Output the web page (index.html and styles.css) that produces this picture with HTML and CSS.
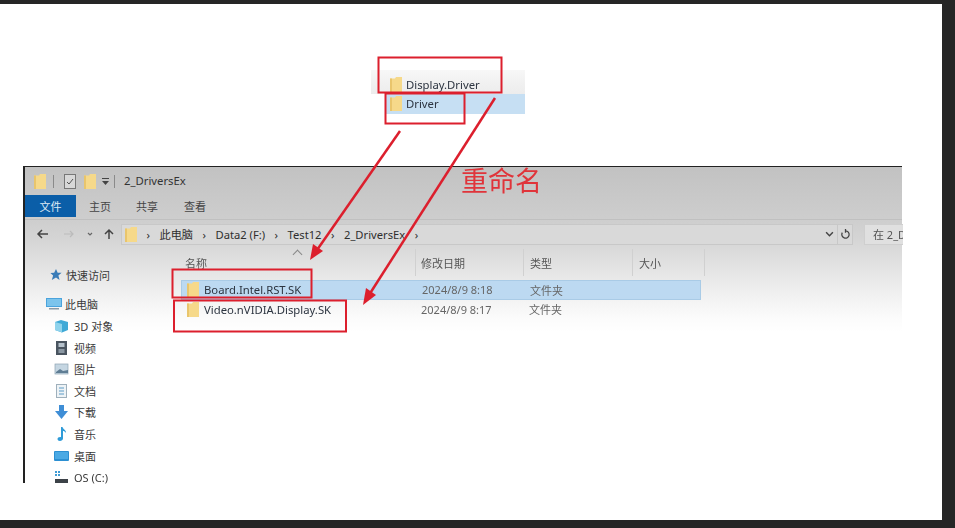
FILE: index.html
```html
<!DOCTYPE html>
<html lang="zh-CN">

<head>
    <meta charset="UTF-8">
    <meta name="viewport" content="width=device-width, initial-scale=1.0">
    <title>重命名</title>
    <link rel="stylesheet" href="styles.css">
</head>

<body>
    <svg class="defs" width="0" height="0">
        <symbol id="folder" viewBox="0 0 12 15">
            <path d="M0 1.500h5l1-1.500h6v15H0z" fill="#f6d98a" />
            <path d="M0 1.500h2V15H0z" fill="#e9c56c" />
        </symbol>
    </svg>
    <div class="page">
        <div class="snippet">
            <div class="snippet-row first">
                <svg class="folder"><use href="#folder" /></svg>
                <span>Display.Driver</span>
            </div>
            <div class="snippet-row active">
                <svg class="folder"><use href="#folder" /></svg>
                <span>Driver</span>
            </div>
        </div>

        <div class="window">
            <div class="titlebar">
                <svg class="folder"><use href="#folder" /></svg>
                <i class="bar-sep"></i>
                <svg class="qa-check" viewBox="0 0 12 15">
                    <rect x="0.500" y="0.500" width="11" height="14" fill="#d8d8d8" stroke="#777" />
                    <path d="M3 8l2 2 4-5" fill="none" stroke="#555" />
                </svg>
                <svg class="folder"><use href="#folder" /></svg>
                <svg class="qa-drop" viewBox="0 0 7 7">
                    <path d="M0 0h7v1H0zM0 3h7L3.500 7z" fill="#444" />
                </svg>
                <i class="bar-sep"></i>
                <span class="title">2_DriversEx</span>
            </div>
            <div class="tabs">
                <span class="tab current">文件</span>
                <span class="tab home">主页</span>
                <span class="tab share">共享</span>
                <span class="tab view">查看</span>
            </div>
            <div class="toolbar">
                <svg class="nav-arrows" viewBox="0 0 80 14">
                    <path d="M13 7H3M7 3L3 7l4 4" fill="none" stroke="#444" stroke-width="1.500" />
                    <path d="M29 7h9M35 4l3 3-3 3" fill="none" stroke="#bbb" stroke-width="1.200" />
                    <path d="M53 6l2 2 2-2" fill="none" stroke="#666" stroke-width="1.200" />
                    <path d="M74 12V3M70 7l4-4 4 4" fill="none" stroke="#444" stroke-width="1.500" />
                </svg>
                <div class="address">
                    <svg class="folder"><use href="#folder" /></svg>
                    <span class="crumb">›</span>
                    <span class="crumb">此电脑</span>
                    <span class="crumb">›</span>
                    <span class="crumb">Data2 (F:)</span>
                    <span class="crumb">›</span>
                    <span class="crumb">Test12</span>
                    <span class="crumb">›</span>
                    <span class="crumb">2_DriversEx</span>
                    <span class="crumb">›</span>
                    <svg class="addr-drop" viewBox="0 0 8 5">
                        <path d="M1 1l3 3 3-3" fill="none" stroke="#444" stroke-width="1.300" />
                    </svg>
                </div>
                <div class="refresh">
                    <svg viewBox="0 0 12 12" width="11" height="11">
                        <path d="M6 2a4 4 0 1 1-3.500 2M6 0v4" fill="none" stroke="#444" stroke-width="1.400" />
                    </svg>
                </div>
                <div class="search">在 2_D</div>
            </div>
            <div class="body">
                <ul class="nav">
                    <li class="quick">
                        <svg viewBox="0 0 14 14"><path d="M7 1l1.800 4h4.200L9.600 8l1.200 5L7 10.300 2.500 13l1.400-5L1 5.500l4-.5z" fill="#3a7cb8" /></svg>
                        快速访问
                    </li>
                    <li class="pc">
                        <svg viewBox="0 0 16 14"><rect x="0" y="1" width="16" height="9" fill="#4aa3dc" /><rect x="1" y="2" width="14" height="7" fill="#7cc4ec" /><rect x="3" y="11" width="10" height="1.500" fill="#8a9aa6" /></svg>
                        此电脑
                    </li>
                    <li>
                        <svg viewBox="0 0 15 14"><path d="M7 1l7 2v8l-6 2.500L1 11V3z" fill="#3fa9d6" /><path d="M1 3l7 2v8.500L1 11z" fill="#8fd3ec" /></svg>
                        3D 对象
                    </li>
                    <li>
                        <svg viewBox="0 0 15 14"><rect x="2" y="0" width="11" height="14" fill="#4a5560" /><rect x="4.500" y="2" width="6" height="4" fill="#b6c2cc" /><rect x="4.500" y="8" width="6" height="4" fill="#8b98a3" /></svg>
                        视频
                    </li>
                    <li>
                        <svg viewBox="0 0 15 14"><rect x="1" y="2" width="13" height="10" fill="#c5d6e2" stroke="#8ea3b2" stroke-width="0.700" /><path d="M2 10l4-3 3 2 5-1v3H2z" fill="#5f7d94" /></svg>
                        图片
                    </li>
                    <li>
                        <svg viewBox="0 0 15 14"><rect x="2.500" y="0.500" width="10" height="13" fill="#eef3f6" stroke="#9fb0bc" /><path d="M5 4h5M5 7h5M5 10h5" stroke="#5c9bc6" /></svg>
                        文档
                    </li>
                    <li>
                        <svg viewBox="0 0 15 14"><path d="M5 0h5v6h4l-6.500 8L1 6h4z" fill="#3f8ed6" /></svg>
                        下载
                    </li>
                    <li>
                        <svg viewBox="0 0 15 14"><path d="M7 0h1.500c.5 2.500 4 3 3.500 6-1-1.500-2-2-3-2v7.500C9 13 7.500 14 6 14s-2.500-.8-2.500-2S5 9.800 7 10.200z" fill="#2f9bd8" /></svg>
                        音乐
                    </li>
                    <li>
                        <svg viewBox="0 0 15 14"><rect x="0" y="2" width="15" height="10" rx="1" fill="#2b8fd2" /><rect x="1" y="3" width="13" height="7" fill="#4aa9e4" /></svg>
                        桌面
                    </li>
                    <li>
                        <svg viewBox="0 0 15 14"><path d="M1 1h2v2H1zM4 1h2v2H4zM1 4h2v2H1zM4 4h2v2H4z" fill="#3f9bd4" /><rect x="1" y="9" width="13" height="4" fill="#3c4248" /></svg>
                        OS (C:)
                    </li>
                </ul>
                <div class="files">
                    <div class="columns">
                        <span class="col name">名称</span>
                        <span class="col date">修改日期</span>
                        <span class="col type">类型</span>
                        <span class="col size">大小</span>
                    </div>
                    <div class="file selected">
                        <span class="cell name">
                            <svg class="folder"><use href="#folder" /></svg>
                            Board.Intel.RST.SK
                        </span>
                        <span class="cell date">2024/8/9 8:18</span>
                        <span class="cell type">文件夹</span>
                    </div>
                    <div class="file">
                        <span class="cell name">
                            <svg class="folder"><use href="#folder" /></svg>
                            Video.nVIDIA.Display.SK
                        </span>
                        <span class="cell date">2024/8/9 8:17</span>
                        <span class="cell type">文件夹</span>
                    </div>
                </div>
            </div>
        </div>
    </div>

    <div class="rename-note">重命名</div>
    <svg class="marks" viewBox="0 0 955 528">
        <g fill="none" stroke="#dc1f2d" stroke-width="2">
            <rect x="378.500" y="57.500" width="123" height="35" />
            <rect x="385.500" y="93.500" width="79" height="30" />
            <rect x="172.500" y="269.500" width="139" height="28" />
            <rect x="174" y="300.500" width="172" height="31" />
            <path d="M400 131L317 250" stroke-width="2.500" />
            <path d="M495 98L369 295" stroke-width="2.500" />
        </g>
        <path d="M310 260l3-16 10 7z" fill="#dc1f2d" />
        <path d="M363 305l3-17 10 7z" fill="#dc1f2d" />
    </svg>
</body>

</html>
```

FILE: styles.css
```css
* {
    box-sizing: border-box;
}

html,
body {
    margin: 0;
    padding: 0;
}

body {
    position: relative;
    width: 955px;
    height: 528px;
    overflow: hidden;
    background-color: #262626;
    font-family: "Noto Sans", "Noto Sans CJK SC", sans-serif;
    font-size: 11px;
    color: #333;
}

.defs {
    position: absolute;
}

.page {
    width: 942px;
    height: 516px;
    margin-top: 4px;
    padding-top: 66px;
    background-color: #fff;
}

.folder {
    display: block;
    flex: none;
    width: 12px;
    height: 15px;
}

.snippet {
    width: 154px;
    margin-left: 371px;
    filter: blur(0.5px);
}

.snippet-row {
    display: flex;
    align-items: center;
    gap: 4px;
    padding-left: 19px;
    font-size: 11.300px;
    color: #2c3440;
}

.snippet-row.first {
    height: 24px;
    padding-top: 5px;
    background: linear-gradient(#f7f7f7, #ececec);
}

.snippet-row.active {
    height: 20px;
    margin-left: 14px;
    padding-left: 5px;
    padding-bottom: 1px;
    background-color: #c6dff3;
}

.window {
    width: 879px;
    height: 317px;
    margin-left: 23px;
    margin-top: 52px;
    border-top: 1px solid #222;
    border-left: 2px solid #222;
    background: linear-gradient(#c2c2c2, #cdcdcd 50px, #d4d4d4 70px, #dedede 90px, #efefef 125px, #fbfbfb 150px, #fff 165px);
    filter: blur(0.5px);
}

.titlebar {
    display: flex;
    align-items: center;
    height: 28px;
    padding-left: 9px;
}

.bar-sep {
    display: block;
    width: 1px;
    height: 13px;
    margin: 0 10px 0 7px;
    background-color: #8a8a8a;
}

.qa-check {
    width: 12px;
    height: 15px;
    margin-right: 8px;
}

.qa-drop {
    width: 7px;
    height: 7px;
    margin-left: 6px;
}

.titlebar .qa-drop + .bar-sep {
    margin: 0 9px 0 5px;
}

.title {
    margin-top: -2px;
    font-size: 11.300px;
    color: #333;
}

.tabs {
    display: flex;
    height: 22px;
}

.tab {
    display: flex;
    align-items: center;
    color: #444;
}

.tab.current {
    justify-content: center;
    width: 51px;
    color: #dfeaf5;
    background-color: #0b5ea8;
}

.tab.home {
    margin-left: 13px;
}

.tab.share {
    margin-left: 25px;
}

.tab.view {
    margin-left: 26px;
}

.toolbar {
    display: flex;
    align-items: center;
    height: 26px;
    margin-top: 2px;
    border-top: 1px solid #c0c0c0;
    padding-top: 3px;
}

.nav-arrows {
    flex: none;
    width: 80px;
    height: 14px;
    margin-left: 10px;
    margin-right: 6px;
}

.address {
    display: flex;
    align-items: center;
    gap: 9.500px;
    flex: none;
    width: 717px;
    height: 21px;
    padding: 0 3px;
    border: 1px solid #c8c8c8;
    background-color: #d9d9d9;
    font-size: 11.200px;
    color: #2e2e2e;
}

.addr-drop {
    width: 9px;
    height: 6px;
    margin-left: auto;
}

.refresh {
    display: flex;
    align-items: center;
    justify-content: center;
    flex: none;
    width: 15px;
    height: 21px;
    border: 1px solid #c8c8c8;
    border-left: 0;
    background-color: #d9d9d9;
}

.search {
    flex: none;
    width: 39px;
    height: 21px;
    margin-left: 11px;
    padding-left: 8px;
    border: 1px solid #cfcfcf;
    border-right: 0;
    background-color: #e0e0e0;
    line-height: 19px;
    white-space: nowrap;
    overflow: hidden;
    color: #555;
}

.body {
    display: flex;
}

.nav {
    flex: none;
    width: 143px;
    margin: 0;
    padding: 19px 0 0 0;
    list-style: none;
    color: #3a3a3a;
}

.nav li {
    display: flex;
    align-items: center;
    gap: 5px;
    height: 21.600px;
    padding-left: 29px;
    white-space: nowrap;
}

.nav svg {
    flex: none;
    width: 15px;
    height: 14px;
}

.nav .quick {
    padding-left: 24px;
    margin-bottom: 8px;
}

.nav .quick svg {
    width: 14px;
    height: 13px;
    margin-right: -2px;
}

.nav .pc {
    padding-left: 21px;
    gap: 3px;
}

.nav .pc svg {
    width: 16px;
}

.files {
    flex: 1;
    padding-top: 4px;
    padding-left: 13px;
}

.columns {
    position: relative;
    display: flex;
    height: 27px;
    margin-bottom: 4px;
    align-items: center;
    color: #555;
}

/* sort marker above the name column */
.columns::before {
    content: "";
    position: absolute;
    left: 113px;
    top: 2px;
    width: 6px;
    height: 6px;
    border-top: 1px solid #888;
    border-left: 1px solid #888;
    transform: rotate(45deg);
}

.col {
    align-self: stretch;
    display: flex;
    align-items: center;
    border-right: 1px solid #d0d0d0;
}

.col.name {
    width: 235px;
    padding-left: 4px;
}

.col.date {
    width: 108px;
    padding-left: 5px;
}

.col.type {
    width: 109px;
    padding-left: 6px;
}

.col.size {
    width: 72px;
    padding-left: 6px;
}

.file {
    display: flex;
    align-items: center;
    width: 520px;
    height: 20px;
    padding-bottom: 2px;
    color: #666;
}

.file.selected {
    padding-bottom: 1px;
    background-color: #bcd9f1;
    border: 1px solid #a9cbe6;
}

.cell.name {
    display: flex;
    align-items: center;
    gap: 5px;
    width: 235px;
    padding-left: 6px;
    font-size: 11.300px;
    color: #2c3440;
}

.file.selected .cell.name {
    padding-left: 5px;
}

.cell.date {
    width: 113px;
    padding-left: 5px;
}

.rename-note {
    position: absolute;
    left: 461px;
    top: 163px;
    font-size: 27px;
    line-height: 36px;
    color: #e0343a;
}

.marks {
    position: absolute;
    left: 0;
    top: 0;
    width: 955px;
    height: 528px;
}
```
